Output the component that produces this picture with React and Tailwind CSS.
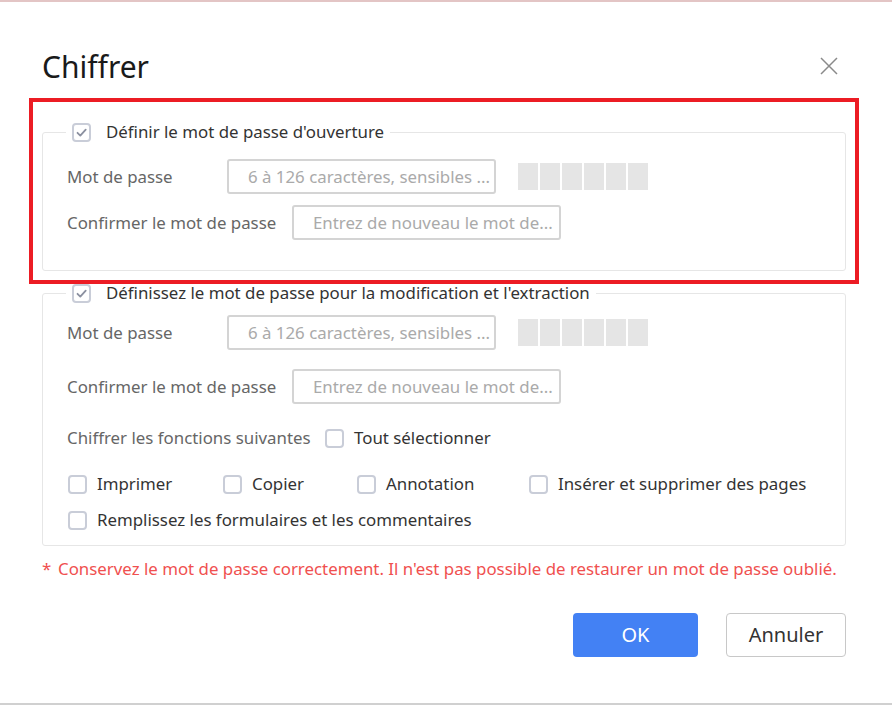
function Box({ checked }) {
  return (
    <span className="flex h-[19px] w-[19px] shrink-0 items-center justify-center rounded-[4px] border-2 border-[#c9cdd8] bg-white">
      {checked && (
        <svg width="13" height="13" viewBox="0 0 13 13" fill="none">
          <path d="M2.5 6.8l2.8 2.8 5.4-6" stroke="#8b90a0" strokeWidth="1.8" strokeLinecap="round" strokeLinejoin="round" />
        </svg>
      )}
    </span>
  );
}

function Check({ label, checked, className = '' }) {
  return (
    <label className={`flex items-center gap-[10px] text-[#333] ${className}`}>
      <Box checked={checked} />
      <span>{label}</span>
    </label>
  );
}

function Field({ label, labelWidth, placeholder, meter }) {
  return (
    <div className="flex h-[35px] items-center">
      <span className={`${labelWidth} shrink-0 text-[#666]`}>{label}</span>
      <div className="flex h-[35px] w-[269px] items-center rounded-[3px] border-2 border-[#d4d4d4] pl-[19px] text-[#aaa]">
        {placeholder}
      </div>
      {meter && (
        <div className="ml-[22px] flex gap-[2px]">
          {[0, 1, 2, 3, 4, 5].map((i) => (
            <span key={i} className="h-[27px] w-[20px] bg-[#e5e5e5]" />
          ))}
        </div>
      )}
    </div>
  );
}

function Group({ legend, children, className = '' }) {
  return (
    <fieldset className={`rounded-[3px] border border-[#e6e6e6] p-0 ${className}`}>
      <legend className="ml-[23px] px-[6px]">
        <Check label={legend} checked className="gap-[15px]" />
      </legend>
      {children}
    </fieldset>
  );
}

export default function App() {
  return (
    <div
      className="relative h-[706px] w-[892px] overflow-hidden border-t-2 border-[#e3c5c5] bg-white text-[16.85px] leading-[20px]"
      style={{ fontFamily: '"Noto Sans", "Open Sans", sans-serif' }}
    >
      <div className="flex items-center justify-between pl-[42px] pr-[54px] pt-[46px]">
        <h1 className="text-[30px] leading-[38px] font-normal text-[#1a1a1a]">Chiffrer</h1>
        <svg width="18" height="18" viewBox="0 0 18 18" fill="none" className="mt-[-2px]">
          <path d="M1 1l16 16M17 1L1 17" stroke="#8a8a8a" strokeWidth="1.5" />
        </svg>
      </div>

      <div className="pl-[42px] pr-[46px] pt-[36px]">
        <Group legend="Définir le mot de passe d'ouverture">
          <div className="flex flex-col gap-[11px] pb-[30px] pl-[24px] pt-[17px]">
            <Field label="Mot de passe" labelWidth="w-[160px]" placeholder="6 à 126 caractères, sensibles ..." meter />
            <Field label="Confirmer le mot de passe" labelWidth="w-[225px]" placeholder="Entrez de nouveau le mot de..." />
          </div>
        </Group>

        <Group legend="Définissez le mot de passe pour la modification et l'extraction" className="mt-[12px]">
          <div className="flex flex-col pb-[15px] pl-[24px] pt-[12px]">
            <div className="flex flex-col gap-[19px]">
              <Field label="Mot de passe" labelWidth="w-[160px]" placeholder="6 à 126 caractères, sensibles ..." meter />
              <Field label="Confirmer le mot de passe" labelWidth="w-[225px]" placeholder="Entrez de nouveau le mot de..." />
            </div>
            <div className="mt-[24px] flex items-center">
              <span className="w-[258px] text-[#666]">Chiffrer les fonctions suivantes</span>
              <Check label="Tout sélectionner" />
            </div>
            <div className="mt-[26px] flex items-center pl-[1px]">
              <Check label="Imprimer" className="w-[155px]" />
              <Check label="Copier" className="w-[134px]" />
              <Check label="Annotation" className="w-[172px]" />
              <Check label="Insérer et supprimer des pages" />
            </div>
            <div className="mt-[16px] flex items-center pl-[1px]">
              <Check label="Remplissez les formulaires et les commentaires" />
            </div>
          </div>
        </Group>

        <p className="mt-[13px] flex text-[#f0504f]">
          <span className="w-[16px]">*</span>
          <span>Conservez le mot de passe correctement. Il n'est pas possible de restaurer un mot de passe oublié.</span>
        </p>

        <div className="mt-[34px] flex justify-end gap-[28px]">
          <button className="h-[44px] w-[125px] rounded-[4px] bg-[#4381f4] text-[20px] text-white">OK</button>
          <button className="h-[44px] w-[120px] rounded-[4px] border border-[#c8c8c8] bg-white text-[20px] text-[#333]">Annuler</button>
        </div>
      </div>

      <div className="absolute bottom-[1px] left-0 right-0 h-[2px] bg-[#d0d0d0]" />
      <div className="pointer-events-none absolute left-[29px] top-[96px] h-[186px] w-[830px] border-4 border-[#ec1c24]" />
    </div>
  );
}
